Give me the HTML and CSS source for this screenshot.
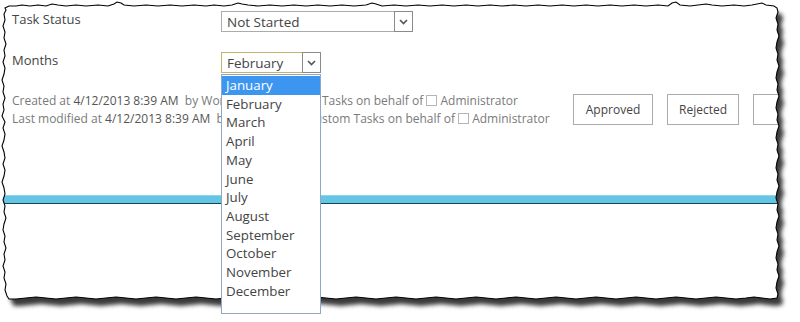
FILE: index.html
```html
<!DOCTYPE html>
<html lang="en">
<head>
    <meta charset="UTF-8">
    <title>Task Form</title>
    <link rel="stylesheet" href="styles.css">
</head>
<body>
<div class="page">
    <div class="form">
        <div class="row first">
            <div class="label">Task Status</div>
            <div class="select status">
                <span class="value">Not Started</span>
                <span class="arrow"><svg width="9" height="6" viewBox="0 0 9 6"><path d="M1 1 L4.5 4.5 L8 1" fill="none" stroke="#555" stroke-width="1.6"/></svg></span>
            </div>
        </div>
        <div class="row">
            <div class="label">Months</div>
            <div class="select-wrap">
                <div class="select month">
                    <span class="value">February</span>
                    <span class="arrow"><svg width="9" height="6" viewBox="0 0 9 6"><path d="M1 1 L4.5 4.5 L8 1" fill="none" stroke="#555" stroke-width="1.6"/></svg></span>
                </div>
                <ul class="list">
                    <li class="sel">January</li>
                    <li>February</li>
                    <li>March</li>
                    <li>April</li>
                    <li>May</li>
                    <li>June</li>
                    <li>July</li>
                    <li>August</li>
                    <li>September</li>
                    <li>October</li>
                    <li>November</li>
                    <li>December</li>
                </ul>
            </div>
        </div>
        <div class="footer">
            <div class="meta">
                <div>Created at <span class="date">4/12/2013 8:39 AM</span>&nbsp; by <span class="who">Workflow</span> Custom Tasks on behalf of <span class="cb"></span> Administrator</div>
                <div>Last modified at <span class="date">4/12/2013 8:39 AM</span>&nbsp; by <span class="who">Workflow</span> Custom Tasks on behalf of <span class="cb"></span> Administrator</div>
            </div>
            <div class="buttons">
                <button class="btn approve">Approved</button>
                <button class="btn reject">Rejected</button>
                <button class="btn extra"></button>
            </div>
        </div>
    </div>
    <div class="bar"></div>

    <!-- torn paper edge laid over the page -->
    <svg class="frame" width="800" height="322" viewBox="0 0 800 322">
        <defs>
            <polygon id="edge" points="5,8 9,6 16,6 22,5 30,6 38,5 46,6 52,4 58,5 66,6 76,5 86,6 98,5 108,6 114,4 117,2 121,3 124,5 134,6 146,5 158,6 170,5 182,6 194,5 206,6 214,5 224,6 232,5 238,3 242,4 248,5 258,6 270,5 282,6 294,5 306,6 318,5 330,6 342,5 354,6 366,5 372,3 376,4 382,6 394,5 406,6 418,5 430,6 442,5 454,6 466,5 478,6 490,5 502,6 514,5 526,6 538,5 550,6 562,5 574,6 586,5 598,6 610,5 622,6 634,5 646,6 658,5 668,6 672,3 676,2 680,5 690,6 698,5 706,4 712,5 722,6 734,5 744,6 752,5 762,3 766,5 774,6 777,8
                778,12 776,18 778,24 777,30 779,36 777,42 776,48 778,54 777,60 779,66 777,72 776,78 778,84 777,90 779,96 777,102 776,108 778,114 777,120 779,126 777,132 776,138 778,144 777,150 779,156 777,162 776,168 778,174 777,180 779,186 777,192 776,198 778,204 777,210 779,216 777,222 776,228 778,234 777,240 779,246 777,252 776,258 778,264 777,270 779,276 777,282 776,288 778,294 777,298
                770,299 762,298 754,297 746,298 736,299 726,298 716,297 706,298 696,299 686,298 676,297 666,298 656,299 646,298 636,297 626,298 616,299 606,298 596,297 586,298 576,299 566,298 556,297 546,298 536,299 526,298 516,297 506,298 496,299 486,298 476,297 466,298 456,299 446,298 436,297 426,298 416,299 406,298 396,297 386,298 376,299 366,298 356,297 346,298 336,299 326,298 316,297 306,298 296,299 286,298 276,297 266,298 256,299 246,298 236,297 226,298 216,299 206,298 196,297 186,298 176,299 166,298 156,297 146,298 136,299 126,298 116,297 106,298 96,299 86,298 76,297 66,298 56,299 46,298 36,297 26,298 16,299 9,299
                7,296 5,290 6,284 4,278 5,272 3,266 5,260 4,254 6,248 4,242 5,236 3,230 4,224 6,218 4,212 5,206 3,200 5,194 4,188 2,182 4,176 5,170 3,164 5,158 4,152 2,146 4,140 5,134 3,128 5,122 2,116 4,110 3,104 5,98 3,92 4,86 2,80 4,74 5,68 3,62 5,56 4,50 6,44 4,38 5,32 3,26 5,20 4,14 6,10"/>
            <mask id="outside">
                <rect width="800" height="322" fill="#fff"/>
                <use href="#edge" fill="#000"/>
            </mask>
            <filter id="blur" x="-5%" y="-5%" width="110%" height="110%">
                <feGaussianBlur stdDeviation="2"/>
            </filter>
        </defs>
        <rect width="800" height="322" fill="#fff" mask="url(#outside)"/>
        <g mask="url(#outside)">
            <use href="#edge" transform="translate(5,7)" fill="#3a3a3a" filter="url(#blur)"/>
        </g>
        <use href="#edge" fill="none" stroke="#000" stroke-width="1.1"/>
    </svg>
</div>
</body>
</html>
```

FILE: styles.css
```css
body {
    margin: 0;
    background: #fff;
    font-family: "Open Sans", "Noto Sans", sans-serif;
    color: #444;
}

.page {
    position: relative;
    width: 800px;
    height: 322px;
    padding-top: 11px;
    box-sizing: border-box;
    overflow: hidden;
}

.form {
    padding-left: 12px;
}

.row {
    display: grid;
    grid-template-columns: 209px auto;
}
.row.first {
    margin-bottom: 20px;
}

.label {
    font-size: 13px;
    line-height: 16px;
    color: #444;
}

.select {
    display: flex;
    align-items: center;
    height: 21px;
    box-sizing: border-box;
    border: 1px solid #ababab;
    background: #fff;
    padding-left: 5px;
    font-size: 13.5px;
    color: #444;
}
.select .value {
    flex: 1;
}
.select .arrow {
    display: flex;
    align-items: center;
    justify-content: center;
    width: 19px;
    height: 21px;
    margin: -1px -1px -1px 0;
    box-sizing: border-box;
    border: 1px solid #8a8a8a;
}
.select.status {
    width: 192px;
}
.select.month {
    width: 100px;
    border-color: #c2b36e;
}

.select-wrap {
    position: relative;
}

.list {
    position: absolute;
    top: 22px;
    left: 0;
    z-index: 2;
    width: 100px;
    height: 240px;
    box-sizing: border-box;
    margin: 0;
    padding: 1px 0 0 0;
    list-style: none;
    background: #fff;
    border: 1px solid #8fa8c8;
}
.list li {
    font-size: 13.3px;
    line-height: 18.7px;
    padding-left: 4px;
    color: #444;
}
.list li.sel {
    background: #3c96f0;
    color: #fff;
}

.footer {
    display: grid;
    grid-template-columns: 561px auto;
    margin-top: 19px;
}

.meta {
    font-size: 12px;
    line-height: 18px;
    color: #7a7a7a;
    white-space: nowrap;
    overflow: hidden;
}
.meta .date {
    color: #555;
}
.meta .who {
    margin-right: 18px;
}
.cb {
    display: inline-block;
    width: 9px;
    height: 9px;
    border: 1px solid #b5b5b5;
    vertical-align: -1px;
}

.buttons {
    display: flex;
    gap: 14px;
    margin-top: 2px;
}
.btn {
    height: 31px;
    padding: 0;
    background: #fff;
    border: 1px solid #ababab;
    font-family: "Open Sans", "Noto Sans", sans-serif;
    font-size: 12px;
    color: #444;
}
.btn.approve {
    width: 80px;
}
.btn.reject {
    width: 72px;
}
.btn.extra {
    width: 72px;
}

.bar {
    margin-top: 67px;
    height: 7px;
    background: #64c5e5;
    border-top: 1px solid #8ed6ee;
    border-bottom: 1px solid #1b4452;
}

.frame {
    position: absolute;
    top: 0;
    left: 0;
}
```
